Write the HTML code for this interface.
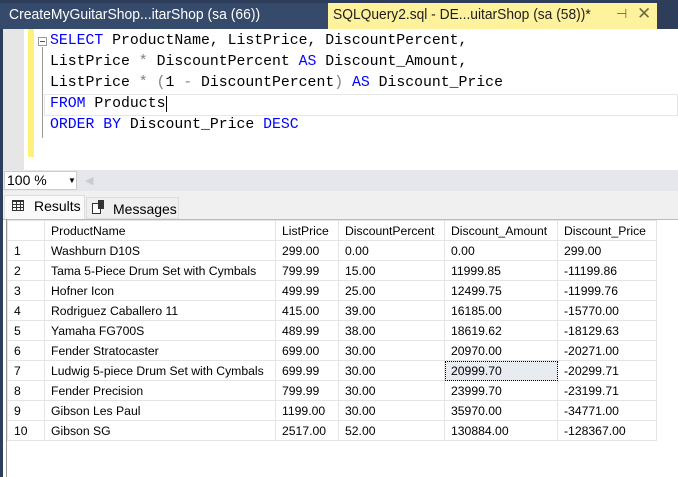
<!DOCTYPE html>
<html><head><style>
*{margin:0;padding:0;box-sizing:border-box}
body{width:678px;height:477px;overflow:hidden;background:#fff;position:relative;font-family:"Liberation Sans",sans-serif}
.a{position:absolute}
.code{font-family:"Liberation Mono",monospace;font-size:14.8px;white-space:pre;color:#000;left:50px}
.k{color:#0000ff}.g{color:#808080}
table{border-collapse:collapse;font-size:12.2px;position:absolute;left:7px;top:220px}
td{height:20px;border:1px solid #e4e4e4;padding:0 0 0 6px;white-space:nowrap;color:#000}
</style></head><body>
<div class="a" style="left:0;top:0;width:678px;height:29px;background:#2d3d5a"></div>
<div class="a" style="left:0;top:3px;width:328px;height:26px;background:#364a6b"></div>
<div class="a" style="left:9px;top:6px;color:#fff;font-size:15px;white-space:nowrap;transform:scaleX(0.93);transform-origin:left">CreateMyGuitarShop...itarShop (sa (66))</div>
<div class="a" style="left:328px;top:3px;width:329px;height:26px;background:#fff29d"></div>
<div class="a" style="left:333px;top:6px;color:#1e1e1e;font-size:15px;white-space:nowrap;transform:scaleX(0.92);transform-origin:left">SQLQuery2.sql - DE...uitarShop (sa (58))*</div>
<div class="a" style="left:616px;top:6px;color:#6b6b4a;font-size:13px">⊣</div>
<div class="a" style="left:637px;top:4px;color:#6b6b4a;font-size:17px">✕</div>
<div class="a" style="left:0;top:29px;width:3px;height:448px;background:#2d3d5a"></div>
<div class="a" style="left:3px;top:29px;width:21px;height:141px;background:#e6e6e6"></div>
<div class="a" style="left:28px;top:29px;width:6px;height:128px;background:#fff07a"></div>
<div class="a" style="left:42px;top:47px;width:1px;height:91px;background:#999"></div>
<div class="a" style="left:38px;top:37px;width:9px;height:9px;border:1px solid #999;background:#fff"></div>
<div class="a" style="left:40px;top:41px;width:5px;height:1px;background:#555"></div>
<div class="a" style="left:44px;top:94px;width:634px;height:22px;border:1px solid #e6e6e6"></div>
<div class="a code" style="top:33px"><span class="k">SELECT</span> ProductName, ListPrice, DiscountPercent,</div>
<div class="a code" style="top:54px">ListPrice <span class="g">*</span> DiscountPercent <span class="k">AS</span> Discount_Amount,</div>
<div class="a code" style="top:75px">ListPrice <span class="g">*</span> <span class="g">(</span>1 <span class="g">-</span> DiscountPercent<span class="g">)</span> <span class="k">AS</span> Discount_Price</div>
<div class="a code" style="top:96px"><span class="k">FROM</span> Products<span style="border-left:1px solid #000;margin-left:1px"></span></div>
<div class="a code" style="top:117px"><span class="k">ORDER BY</span> Discount_Price <span class="k">DESC</span></div>
<div class="a" style="left:3px;top:170px;width:675px;height:21px;background:#e6e7ec"></div>
<div class="a" style="left:4px;top:171px;width:73px;height:19px;background:#fff;border:1px solid #ccc;font-size:14px;padding-left:2px;line-height:17px">100 %<span style="position:absolute;left:63px;top:0;font-size:8px">▼</span></div>
<div class="a" style="left:85px;top:174px;color:#ccc;font-size:11px">◀</div>
<div class="a" style="left:3px;top:191px;width:675px;height:28px;background:#f0f0f0"></div>
<div class="a" style="left:4px;top:195px;width:81px;height:25px;background:#fafafa;border:1px solid #ddd;border-bottom:none;font-size:14px;padding:2px 0 0 29px">Results</div>
<div class="a" style="left:12px;top:200px;width:12px;height:11px;border:1px solid #333;background:repeating-linear-gradient(90deg,transparent 0 3px,#333 3px 4px),repeating-linear-gradient(0deg,transparent 0 2px,#333 2px 3px)"></div>
<div class="a" style="left:86px;top:197px;width:93px;height:22px;background:#efefef;border:1px solid #ddd;font-size:14px;padding:3px 0 0 26px">Messages</div>
<div class="a" style="left:92px;top:203px;width:9px;height:11px;border:1px solid #333;background:#fff"></div>
<div class="a" style="left:98px;top:200px;width:6px;height:9px;background:#333"></div>
<div class="a" style="left:3px;top:219px;width:675px;height:1px;background:#bbb"></div>
<div class="a" style="left:6px;top:219px;width:1px;height:258px;background:#999"></div>
<table>
<colgroup><col style="width:37px"><col style="width:231px"><col style="width:63px"><col style="width:106px"><col style="width:113px"><col style="width:99px"></colgroup>
<tr><td></td><td>ProductName</td><td>ListPrice</td><td>DiscountPercent</td><td>Discount_Amount</td><td>Discount_Price</td></tr>
<tr><td>1</td><td>Washburn D10S</td><td>299.00</td><td>0.00</td><td>0.00</td><td>299.00</td></tr>
<tr><td>2</td><td>Tama 5-Piece Drum Set with Cymbals</td><td>799.99</td><td>15.00</td><td>11999.85</td><td>-11199.86</td></tr>
<tr><td>3</td><td>Hofner Icon</td><td>499.99</td><td>25.00</td><td>12499.75</td><td>-11999.76</td></tr>
<tr><td>4</td><td>Rodriguez Caballero 11</td><td>415.00</td><td>39.00</td><td>16185.00</td><td>-15770.00</td></tr>
<tr><td>5</td><td>Yamaha FG700S</td><td>489.99</td><td>38.00</td><td>18619.62</td><td>-18129.63</td></tr>
<tr><td>6</td><td>Fender Stratocaster</td><td>699.00</td><td>30.00</td><td>20970.00</td><td>-20271.00</td></tr>
<tr><td>7</td><td>Ludwig 5-piece Drum Set with Cymbals</td><td>699.99</td><td>30.00</td><td style="background:#e8ecf0;outline:1px dotted #000;outline-offset:-1px">20999.70</td><td>-20299.71</td></tr>
<tr><td>8</td><td>Fender Precision</td><td>799.99</td><td>30.00</td><td>23999.70</td><td>-23199.71</td></tr>
<tr><td>9</td><td>Gibson Les Paul</td><td>1199.00</td><td>30.00</td><td>35970.00</td><td>-34771.00</td></tr>
<tr><td>10</td><td>Gibson SG</td><td>2517.00</td><td>52.00</td><td>130884.00</td><td>-128367.00</td></tr>
</table>
</body></html>
